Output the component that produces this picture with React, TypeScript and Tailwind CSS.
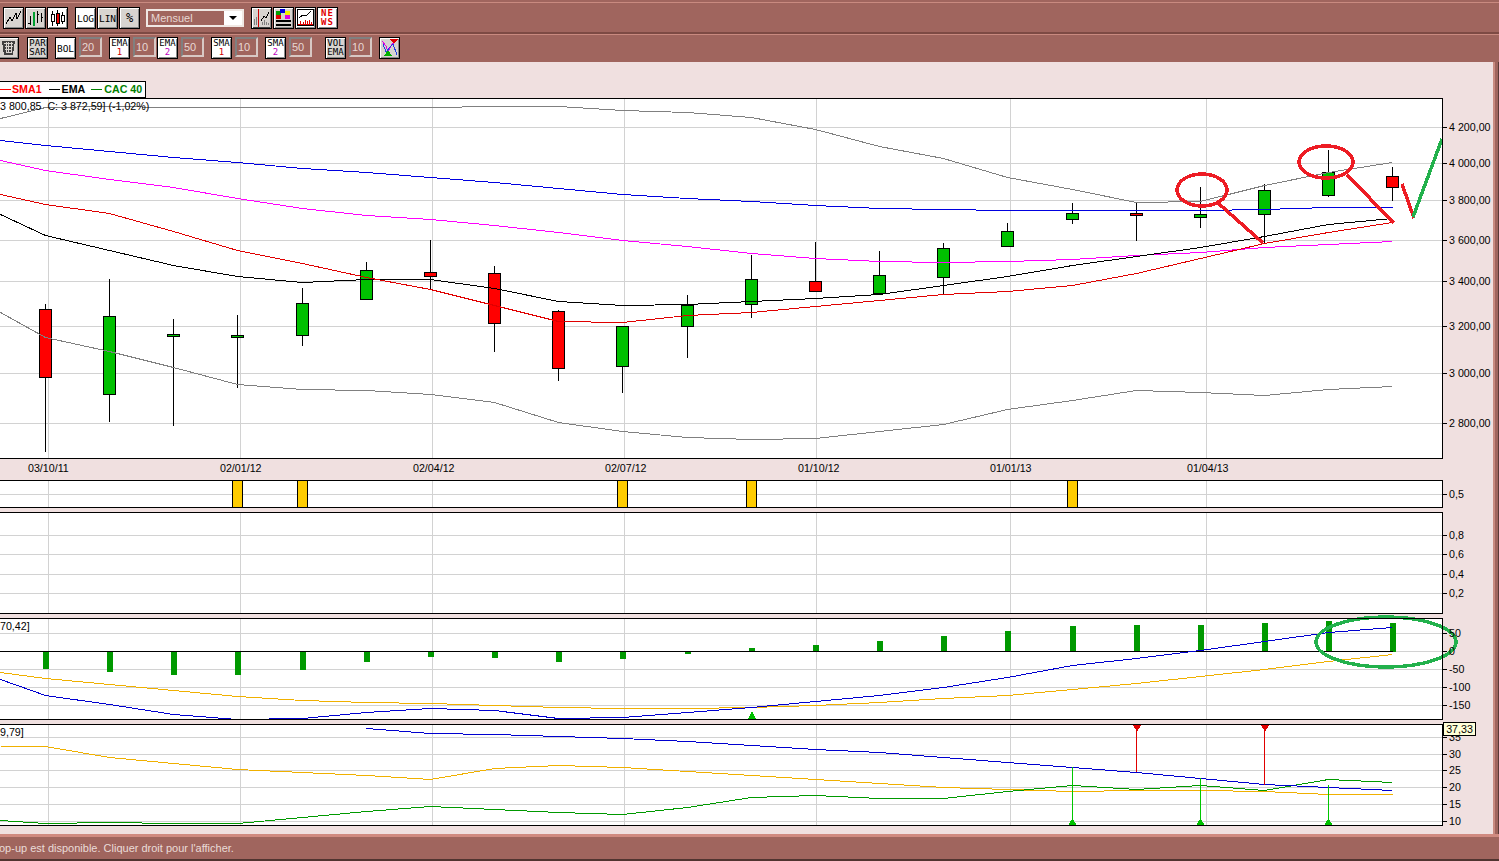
import type { ReactNode } from 'react';

type Pt = [number, number];

const GRID_X = [48, 240, 432, 624, 816, 1010, 1206];
const XS = [45, 109, 173, 237, 302, 366, 430, 494, 558, 622, 687, 751, 815, 879, 943, 1007, 1072, 1136, 1200, 1264, 1328, 1392];

// high, low, body top, body bottom, red?
const CANDLES: [number, number, number, number, boolean][] = [
  [304, 452, 309, 377, true],
  [279, 422, 316, 394, false],
  [319, 426, 334, 336, false],
  [315, 388, 335, 337, false],
  [288, 346, 303, 335, false],
  [262, 300, 270, 299, false],
  [240, 290, 272, 276, true],
  [266, 352, 273, 323, true],
  [310, 381, 311, 368, true],
  [326, 393, 326, 366, false],
  [295, 358, 305, 326, false],
  [255, 318, 279, 304, false],
  [242, 292, 281, 291, true],
  [251, 295, 275, 293, false],
  [243, 295, 248, 277, false],
  [223, 247, 231, 246, false],
  [203, 224, 213, 219, false],
  [203, 241, 213, 215, true],
  [187, 228, 214, 217, false],
  [184, 243, 190, 214, false],
  [150, 197, 172, 195, false],
  [167, 201, 176, 187, true],
];

const line = (ys: number[], first?: number): Pt[] => {
  const pts = XS.map((x, i) => [x, ys[i]] as Pt);
  return first === undefined ? pts : [[0, first], ...pts];
};

const UPPER = line([107, 106, 107, 107, 107, 107, 107, 106, 106, 110, 112, 117, 129, 146, 158, 177, 189, 202, 201, 185, 172, 162], 118);
const LOWER = line([337, 351, 367, 384, 389, 390, 394, 402, 422, 431, 437, 439, 438, 431, 424, 409, 400, 390, 392, 395, 389, 386], 312);
const BLUE = line([145, 151, 157, 162, 168, 172, 177, 182, 188, 194, 198, 201, 205, 208, 209, 210, 210, 210, 210, 209, 207, 207], 140);
const MAGENTA = line([170, 179, 187, 198, 208, 215, 219, 225, 232, 240, 246, 253, 258, 261, 262, 261, 259, 255, 252, 247, 244, 241], 160);
const SMA = line([204, 213, 231, 250, 263, 277, 289, 305, 321, 322, 315, 312, 306, 300, 294, 291, 285, 273, 258, 243, 232, 222], 194);
const EMA = line([235, 250, 265, 276, 282, 279, 279, 288, 301, 305, 304, 301, 298, 294, 285, 276, 265, 256, 247, 236, 224, 218], 214);

const MACD_TOPS = [669, 672, 675, 675, 670, 662, 657, 658, 662, 659, 654, 648, 645, 641, 636, 631, 626, 625, 625, 623, 621, 623];
const MACD_BLUE = line([695, 704, 714, 719, 718, 712, 708, 710, 718, 717, 712, 707, 701, 695, 687, 677, 665, 658, 650, 641, 632, 627], 679);
const MACD_ORANGE = line([678, 684, 690, 696, 700, 702, 703, 705, 707, 708, 708, 707, 705, 702, 698, 695, 689, 683, 676, 669, 661, 654], 672);

const DMI_BLUE: Pt[] = line([0, 0, 0, 0, 0, 728, 733, 734, 736, 738, 741, 745, 749, 752, 757, 762, 767, 772, 778, 784, 787, 790]).slice(5);
const DMI_ORANGE = line([746, 757, 763, 769, 772, 775, 779, 768, 765, 767, 771, 775, 779, 783, 787, 789, 791, 790, 790, 791, 794, 794], 746);
const DMI_GREEN = line([823, 822, 823, 823, 817, 811, 806, 809, 812, 814, 807, 797, 795, 798, 798, 791, 785, 789, 785, 790, 779, 782], 820);

const DATES: [string, number][] = [['03/10/11', 28], ['02/01/12', 220], ['02/04/12', 413], ['02/07/12', 605], ['01/10/12', 798], ['01/01/13', 990], ['01/04/13', 1187]];

function Curve({ pts, color }: { pts: Pt[]; color: string }) {
  return <polyline points={pts.map(([x, y]) => `${x + 0.5},${y + 0.5}`).join(' ')} fill="none" stroke={color} strokeWidth={1} />;
}

function Panel({ top, bottom, labels, hGrid, children }: { top: number; bottom: number; labels: [string, number][]; hGrid: number[]; children?: ReactNode }) {
  return (
    <svg width={1493} height={bottom - top} viewBox={`0 ${top} 1493 ${bottom - top}`} className="block overflow-visible text-[10.67px] fill-black" shapeRendering="crispEdges">
      <rect x={-2} y={top + 0.5} width={1444} height={bottom - top - 1} fill="#fff" />
      {hGrid.map((y) => (
        <line key={y} x1={0} x2={1442} y1={y + 0.5} y2={y + 0.5} stroke="#d2d2d2" />
      ))}
      {GRID_X.map((x) => (
        <line key={x} x1={x + 0.5} x2={x + 0.5} y1={top} y2={bottom} stroke="#d2d2d2" />
      ))}
      {children}
      <rect x={-2} y={top + 0.5} width={1444} height={bottom - top - 1} fill="none" stroke="#000" />
      {labels.map(([t, y]) => (
        <g key={t}>
          <line x1={1442} x2={1447} y1={y + 0.5} y2={y + 0.5} stroke="#000" />
          <text x={1449} y={y + 4} shapeRendering="auto">{t}</text>
        </g>
      ))}
    </svg>
  );
}

function ToolButton({ white, children, className }: { white?: boolean; children: ReactNode; className?: string }) {
  return (
    <div
      className={`w-[21px] h-[22px] shrink-0 flex flex-col items-center justify-center border border-black shadow-[inset_1px_1px_0_#fff,inset_-1px_-1px_0_#8a8a8a] font-['DejaVu_Sans_Mono',monospace] leading-[9px] ${white ? 'bg-white' : 'bg-[#d8d4d0]'} ${className ?? 'text-[9.5px] text-black'}`}
    >
      {children}
    </div>
  );
}

function NumBox({ value }: { value: string }) {
  return (
    <div className="w-[23px] h-[20px] ml-[3px] shrink-0 pl-[1px] flex items-center bg-[#a0655e] border-2 border-t-[#808080] border-l-[#808080] border-r-[#d8c8c4] border-b-[#d8c8c4] text-[11px] text-[#e8d8d4]">
      {value}
    </div>
  );
}

function Icon({ children }: { children: ReactNode }) {
  return (
    <svg width={19} height={20} viewBox="0 0 19 20" shapeRendering="crispEdges">
      {children}
    </svg>
  );
}

function Stack({ top, bottom, color }: { top: string; bottom: string; color?: string }) {
  return (
    <>
      <span>{top}</span>
      <span className={color ?? ''}>{bottom}</span>
    </>
  );
}

export default function App() {
  return (
    <div className="w-[1499px] h-[861px] overflow-hidden flex flex-col bg-[#a0655e] font-['Liberation_Sans',sans-serif]">
      {/* toolbars */}
      <div className="h-[32px] mt-[2px] pt-[4px] pl-[3px] flex items-start border-t border-[#c98a80] border-b-2 border-b-[#7d4a44]">
        <ToolButton>
          <Icon>
            <polyline points="2,16 6,9 8,13 12,5 13,11 17,3" fill="none" stroke="#000" strokeWidth={1} />
          </Icon>
        </ToolButton>
        <ToolButton className="ml-px">
          <Icon>
            <path d="M4 8v9M2 15h2M11 3v12M13 6h-2M15 5v9M17 9h-2" stroke="#000" fill="none" />
            <rect x={7} y={4} width={2} height={14} fill="#00a030" />
          </Icon>
        </ToolButton>
        <ToolButton white className="ml-px">
          <Icon>
            <path d="M4.500 3v15M9.500 2v16M14.500 4v12" stroke="#000" fill="none" />
            <rect x={3} y={6} width={3} height={7} fill="#fff" stroke="#000" />
            <rect x={8} y={5} width={3} height={10} fill="#f00000" stroke="#000" />
            <rect x={13} y={7} width={3} height={6} fill="#fff" stroke="#000" />
          </Icon>
        </ToolButton>
        <ToolButton white className="ml-[7px] text-[9.5px] text-black">LOG</ToolButton>
        <ToolButton className="ml-px text-[9.5px] text-black">LIN</ToolButton>
        <ToolButton className="ml-px text-[12px] text-black">%</ToolButton>
        <div className="w-[98px] h-[18px] ml-[6px] mt-[2px] flex items-center justify-between pl-[3px] border-2 border-[#f0e8e4] text-[11px] text-[#e8d8d4] bg-[#a0655e]">
          <span>Mensuel</span>
          <span className="w-[18px] h-[14px] bg-white flex items-center justify-center">
            <span className="w-0 h-0 border-x-[4px] border-x-transparent border-t-[4px] border-t-black" />
          </span>
        </div>
        <ToolButton className="ml-[7px]">
          <Icon>
            <path d="M2 17v-6M4 17v-8M10 17v-3M12 17v-5M14 17v-3M16 17v-2" stroke="#808080" fill="none" />
            <path d="M9 13l3-5 2 2 3-6" stroke="#000" fill="none" />
            <path d="M6.500 1v18" stroke="#d00000" fill="none" />
            <path d="M1 19h17" stroke="#404040" fill="none" />
          </Icon>
        </ToolButton>
        <ToolButton className="ml-px">
          <Icon>
            <rect x={2} y={3} width={5} height={4} fill="#00a000" />
            <rect x={6} y={1} width={5} height={4} fill="#0000e0" />
            <rect x={11} y={3} width={5} height={4} fill="#f0f000" />
            <rect x={2} y={7} width={5} height={4} fill="#e00000" />
            <rect x={11} y={7} width={5} height={4} fill="#e000e0" />
            <rect x={2} y={12} width={15} height={2} fill="#000" />
            <rect x={2} y={16} width={15} height={2} fill="#000" />
          </Icon>
        </ToolButton>
        <ToolButton white className="ml-px">
          <Icon>
            <rect x={1.500} y={1.500} width={16} height={16} fill="none" stroke="#000" />
            <polyline points="3,10 7,7 10,8 15,3" fill="none" stroke="#000" />
            <path d="M4 16v-3M7 16v-2M9 16v-4M11 16v-3M13 16v-4M15 16v-2" stroke="#e00000" fill="none" />
            <path d="M2 16h15" stroke="#e00000" fill="none" />
          </Icon>
        </ToolButton>
        <ToolButton white className="ml-px text-[9px] font-bold tracking-[1px] text-[#e00000]">
          <span>NE</span>
          <span>WS</span>
        </ToolButton>
      </div>
      <div className="h-[30px] pt-[2px] -ml-[2px] flex items-start border-t border-[#c98a80] border-b-2 border-b-[#7d4a44]">
        <ToolButton>
          <Icon>
            <path d="M3 3h13l-2 14h-9z" fill="#404040" />
            <path d="M5 5h9M5.500 8h8M6 11h7M6.500 14h6M7 4v11M9.500 4v11M12 4v11" stroke="#d8d4d0" fill="none" />
          </Icon>
        </ToolButton>
        <ToolButton className="ml-[8px] text-[9px] text-black">
          <span>PAR</span>
          <span>SAR</span>
        </ToolButton>
        <ToolButton white className="ml-[7px] text-[9.5px] text-black">BOL</ToolButton>
        <NumBox value="20" />
        <ToolButton white className="ml-[7px] text-[9px] text-black">
          <Stack top="EMA" bottom="1" color="text-[#d00000]" />
        </ToolButton>
        <NumBox value="10" />
        <ToolButton white className="ml-px text-[9px] text-black">
          <Stack top="EMA" bottom="2" color="text-[#c000c0]" />
        </ToolButton>
        <NumBox value="50" />
        <ToolButton white className="ml-[7px] text-[9px] text-black">
          <Stack top="SMA" bottom="1" color="text-[#d00000]" />
        </ToolButton>
        <NumBox value="10" />
        <ToolButton white className="ml-[7px] text-[9px] text-black">
          <Stack top="SMA" bottom="2" color="text-[#c000c0]" />
        </ToolButton>
        <NumBox value="50" />
        <ToolButton className="ml-[13px] text-[9px] text-black">
          <span>VOL</span>
          <span>EMA</span>
        </ToolButton>
        <NumBox value="10" />
        <ToolButton className="ml-[7px]">
          <Icon>
            <polyline points="2,3 6,8 8,14 12,6 14,5" fill="none" stroke="#e000e0" />
            <polyline points="3,6 6,14 10,9 13,6 17,17" fill="none" stroke="#2040e0" />
            <path d="M10 1h8l-4 5z" fill="#e00000" />
            <path d="M4 18l4-6 4 6z" fill="#00b000" />
          </Icon>
        </ToolButton>
      </div>

      {/* chart area */}
      <div className="flex-1 flex min-h-0 -mt-[2px]">
        <div className="w-[1493px] h-[772px] bg-[#f0e0e0] text-black">
          <div className="h-[17px] w-[146px] mt-[19px] pl-0 flex items-center whitespace-nowrap border border-l-0 border-black bg-white text-[10.67px] font-bold leading-none">
            <span className="w-[11px] h-px bg-[#ff0000]" />
            <span className="ml-px text-[#ff0000]">SMA1</span>
            <span className="w-[11px] h-px bg-black ml-[7px]" />
            <span className="ml-[2px]">EMA</span>
            <span className="w-[11px] h-px bg-[#008000] ml-[6px]" />
            <span className="ml-[2px] text-[#008000]">CAC 40</span>
          </div>

          {/* main chart */}
          <Panel
            top={98}
            bottom={459}
            hGrid={[127, 163, 200, 240, 281, 326, 373, 423]}
            labels={[['4 200,00', 127], ['4 000,00', 163], ['3 800,00', 200], ['3 600,00', 240], ['3 400,00', 281], ['3 200,00', 326], ['3 000,00', 373], ['2 800,00', 423]]}
          >
            {CANDLES.map(([hi, lo, top, bottom, red], i) => (
              <g key={XS[i]}>
                <line x1={XS[i] + 0.5} x2={XS[i] + 0.5} y1={hi} y2={lo} stroke="#000" />
                <rect x={XS[i] - 5.5} y={top + 0.5} width={12} height={bottom - top} fill={red ? '#ff0000' : '#00c000'} stroke="#000" />
              </g>
            ))}
            <Curve pts={UPPER} color="#808080" />
            <Curve pts={LOWER} color="#808080" />
            <Curve pts={BLUE} color="#0000e0" />
            <Curve pts={MAGENTA} color="#ff00ff" />
            <Curve pts={EMA} color="#000" />
            <Curve pts={SMA} color="#e00000" />
            <text x={0} y={110} shapeRendering="auto" className="whitespace-pre">3 800,85  C: 3 872,59] (-1,02%)</text>
            <g fill="none" stroke="#ed1c24" strokeWidth={3.5}>
              <ellipse cx={1202} cy={190} rx={25} ry={16} />
              <ellipse cx={1326} cy={162} rx={27} ry={16} />
              <line x1={1218} y1={203} x2={1263} y2={243} />
              <line x1={1347} y1={175} x2={1394} y2={223} />
              <line x1={1402} y1={184} x2={1414} y2={218} />
            </g>
            <line x1={1413} y1={217} x2={1442} y2={139} stroke="#22b14c" strokeWidth={3.5} />
          </Panel>
          <div className="h-[21px] flex text-[10.67px] leading-[16px] pt-[1px]">
            {DATES.map(([t, x], i) => (
              <span key={t} className="w-0 whitespace-nowrap" style={{ marginLeft: x - (i ? DATES[i - 1][1] : 0) }}>{t}</span>
            ))}
          </div>

          {/* signal bars */}
          <Panel top={480} bottom={508} hGrid={[494]} labels={[['0,5', 494]]}>
            {[237, 302, 622, 751, 1072].map((x) => (
              <rect key={x} x={x - 4.5} y={480.5} width={10} height={27} fill="#ffcc00" stroke="#000" />
            ))}
          </Panel>

          <div className="mt-[4px]">
            <Panel top={512} bottom={614} hGrid={[535, 554, 574, 593]} labels={[['0,8', 535], ['0,6', 554], ['0,4', 574], ['0,2', 593]]} />
          </div>

          {/* MACD */}
          <div className="mt-[4px]">
            <Panel top={618} bottom={720} hGrid={[633, 651, 669, 687, 705]} labels={[['50', 633], ['0', 651], ['-50', 669], ['-100', 687], ['-150', 705]]}>
              {MACD_TOPS.map((t, i) => (
                <rect key={XS[i]} x={XS[i] - 2} y={t < 652 ? t : 652} width={6} height={Math.abs(652 - t)} fill="#009900" />
              ))}
              <line x1={0} x2={1393} y1={651.5} y2={651.5} stroke="#000" />
              <Curve pts={MACD_ORANGE} color="#f0b000" />
              <Curve pts={MACD_BLUE} color="#0000d0" />
              <path d="M752 711l4 8h-8z" fill="#00c000" />
              <text x={0} y={630} shapeRendering="auto">70,42]</text>
              <ellipse cx={1386} cy={642} rx={70} ry={25} fill="none" stroke="#22b14c" strokeWidth={3.5} />
            </Panel>
          </div>

          {/* DMI */}
          <div className="mt-[4px] relative">
            <Panel top={724} bottom={826} hGrid={[737, 754, 770, 787, 804, 821]} labels={[['35', 737], ['30', 754], ['25', 770], ['20', 787], ['15', 804], ['10', 821]]}>
              <Curve pts={DMI_ORANGE} color="#f0b000" />
              <Curve pts={DMI_GREEN} color="#009900" />
              <Curve pts={DMI_BLUE} color="#0000d0" />
              <path d="M1136.500 728v44M1264.500 728v57" stroke="#e00000" />
              <path d="M1133 725h8l-4 7zM1261 725h8l-4 7z" fill="#e00000" />
              <path d="M1072.500 767v56M1200.500 778v45M1328.500 785v38" stroke="#00c800" />
              <path d="M1072.500 818l4 7h-8zM1200.500 818l4 7h-8zM1328.500 818l4 7h-8z" fill="#00c000" />
              <text x={0} y={736} shapeRendering="auto">9,79]</text>
            </Panel>
            <div className="absolute left-[1443px] top-[-2px] w-[33px] h-[14px] border border-black bg-[#ffffd8] text-[10.67px] leading-[12px] text-center">37,33</div>
          </div>
        </div>
        <div className="w-[6px] h-[772px] border-l-2 border-[#c98a80] bg-[#a0655e] border-r border-r-[#5a3a36]" />
      </div>

      {/* status bar */}
      <div className="h-[27px] shrink-0 -mt-[2px] flex items-center border-t-[3px] border-[#d08a80] border-b-2 border-b-[#503430] text-[11px] text-[#eadcd8] bg-[#a0655e]">
        <span className="-ml-px">op-up est disponible. Cliquer droit pour l'afficher.</span>
      </div>
    </div>
  );
}
